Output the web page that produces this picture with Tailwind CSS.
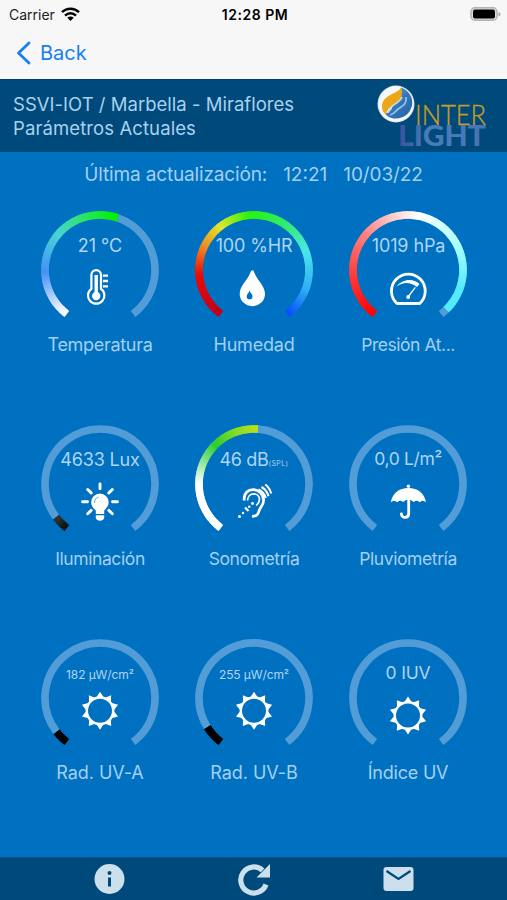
<!DOCTYPE html>
<html lang="es">
<head>
<meta charset="utf-8">
<title>SSVI-IOT</title>
<script src="https://cdn.jsdelivr.net/npm/@tailwindcss/browser@4"></script>
</head>
<body class="w-[507px] h-[900px] overflow-hidden bg-[#0071c1] font-['Inter','Liberation_Sans',sans-serif] flex flex-col">
<header class="h-[79px] shrink-0 bg-[#f7f7f8] flex flex-col">
  <div class="h-7 grid grid-cols-3 items-center pl-[9px] pr-[6px] text-[14px] text-[#222]">
    <div class="flex items-center gap-[6px]"><span>Carrier</span>
      <svg width="19" height="14" viewBox="0 0 19 14" fill="none" stroke="#050505" stroke-width="2.5"><path d="M1 5.2C5.8.5 13.2.5 18 5.2M4 8.6c3.2-3 7.8-3 11 0"/><path d="M9.5 14 6.3 10.8c1.8-1.6 4.6-1.6 6.4 0z" fill="#050505" stroke="none"/></svg>
    </div>
    <div class="text-center font-semibold text-black text-[14px] tracking-[0.55px] whitespace-nowrap">12:28 PM</div>
    <svg class="justify-self-end" width="31" height="15" viewBox="0 0 31 15"><rect x="1" y=".8" width="26" height="12.4" rx="4" fill="#ddd" stroke="#b4b4b4" stroke-width="1.5"/><rect x="3" y="2.6" width="22" height="8.8" rx="2" fill="#000"/><path d="M28.5 5v4.6q2-.6 2-2.3t-2-2.3" fill="#aaa"/></svg>
  </div>
  <div class="h-12 flex items-center gap-[9px] pl-4 pt-px text-[#1680f5] text-[20px]">
    <svg width="15" height="24" viewBox="0 0 15 24" fill="none" stroke="#1680f5" stroke-width="2.8" stroke-linecap="round" stroke-linejoin="round"><path d="M13 2 2.5 12 13 22"/></svg>
    <span>Back</span>
  </div>
</header>
<section class="h-[73px] shrink-0 bg-[#004a7b] border-t border-[#003e69] flex justify-between pl-[13px] pr-[18px]">
  <div class="pt-[12px] text-[18.5px] leading-6 text-[#a9d1f0] whitespace-nowrap"><p class="tracking-[0.02px]">SSVI-IOT / Marbella - Miraflores</p><p class="tracking-[0.1px]">Parámetros Actuales</p></div>
  <svg width="112" height="72" viewBox="0 0 112 72">
    <defs><linearGradient id="lg" x1="0" x2="1"><stop offset="0" stop-color="#394f9f"/><stop offset=".35" stop-color="#4a7dba"/><stop offset="1" stop-color="#4773b5"/></linearGradient>
    <linearGradient id="bl" x1="0" x2="1" y2="1"><stop offset="0" stop-color="#6cb5e8"/><stop offset=".5" stop-color="#3576bb"/><stop offset="1" stop-color="#2762a5"/></linearGradient></defs>
    <circle cx="19" cy="24" r="18.5" fill="#dfe5eb"/><circle cx="19" cy="24" r="17.4" fill="#f7f8f9"/>
    <path d="M24 7.500c8 3 12.500 10 11 18-2 8-8 13-16 13-5 0-9-2-11-5 5-1 7-4 8-9 6-3 10-8 8-17z" fill="url(#bl)"/>
    <path d="M24 7.500c-2 6-19 7-19 19 0 4 1 6 4 8 2-10 12-9 15-16 1.500-4 1-8 0-11z" fill="#eda716"/>
    <path d="M11 33c1-9 11-8 14-16" fill="none" stroke="#c7dcea" stroke-width="1.600"/>
    <path d="M29 17c1 9-5 9-9 13-2 2-3 4-7 5" fill="none" stroke="#8bc2e8" stroke-width="1.800"/>
    <text x="38" y="44.500" textLength="71" lengthAdjust="spacingAndGlyphs" class="font-['Lato'] font-light text-[27px]" fill="#c79b25" stroke="#c79b25" stroke-width=".35">INTER</text>
    <text x="21" y="65.500" textLength="88" lengthAdjust="spacingAndGlyphs" class="font-['Lato'] font-black text-[28px]" fill="url(#lg)">LIGHT</text>
  </svg>
</section>
<div class="h-[44px] shrink-0 flex justify-center items-center gap-4 pt-[2px] text-[19px] text-[#a3d0f0]"><span class="tracking-[-0.15px]">Última actualización:</span><span>12:21</span><span class="tracking-[-0.1px]">10/03/22</span></div>
<main id="grid" class="flex-1 pt-[14px] pl-[23px] grid grid-cols-[154px_154px_154px] auto-rows-[214px] content-start"></main>
<footer class="h-[43px] shrink-0 bg-[#004a7b] border-t border-[#00568f] flex items-center pl-[94px] text-[#ccdfed]">
  <svg width="31" height="32" viewBox="0 0 31 32"><circle cx="15.5" cy="16" r="15" fill="currentColor"/><circle cx="15.5" cy="10" r="2" fill="#004a7b"/><path d="M14 14.5h3v9h-3z" fill="#004a7b"/></svg>
  <svg class="ml-[113px]" width="33" height="33" viewBox="0 0 33 33"><path d="M24.6 7.400A13 13 0 1 0 28 21.500" fill="none" stroke="currentColor" stroke-width="5.200"/><path d="M32 1v13.500H18.500z" fill="currentColor"/></svg>
  <svg class="ml-[112px]" width="31" height="26" viewBox="0 0 31 26"><rect x=".5" y="1" width="30" height="24" rx="3" fill="currentColor"/><path d="m3.500 5 12 8 12-8" fill="none" stroke="#004a7b" stroke-width="2.200"/></svg>
</footer>
<script>
const R = 55, START = -143, END = 143;
const pt = (a, r = R, cx = 60, cy = 60) => { const t = a * Math.PI / 180; return (cx + r * Math.sin(t)).toFixed(2) + ' ' + (cy - r * Math.cos(t)).toFixed(2); };
const arc = (a, b, c) => `<path d="M${pt(a)}A${R} ${R} 0 ${b - a > 180 ? 1 : 0} 1 ${pt(b)}" fill="none" stroke="${c}" stroke-width="7.6"/>`;
function color(stops, a) {
  let i = 0;
  while (i < stops.length - 2 && a > stops[i + 1][0]) i++;
  const [p, c] = stops[i], [q, d] = stops[i + 1], t = Math.max(0, Math.min(1, (a - p) / (q - p)));
  return 'rgb(' + c.map((v, k) => Math.round(v + (d[k] - v) * t)).join() + ')';
}
function ring(end, stops) {
  let s = end >= END ? '' : arc(stops ? end : START, END, '#529dd8');
  if (stops) for (let a = START; a < end; a += 2) s += arc(a, Math.min(a + 3.5, end), color(stops, a + 1));
  return s;
}
function sun(cy) {
  let o = '';
  for (let i = 0; i < 10; i++) o += `M${pt(i*36-15,14,60,cy)}L${pt(i*36,19,60,cy)}L${pt(i*36+15,14,60,cy)}z`;
  return `<path d="${o}" fill="#fff"/><circle cx="60" cy="${cy}" r="13.2" fill="none" stroke="#fff" stroke-width="2.4"/>`;
}
const icons = {
  therm: `<g fill="none" stroke="#fff"><path d="M51.400 78.800V65a4.800 4.800 0 0 1 9.600 0v13.800a8.200 8.200 0 1 1-9.600 0z" stroke-width="2.200"/><path d="M56.200 65v20" stroke-width="3.400"/><path d="M63 65.600h5M63 71h5M63 76.400h5" stroke-width="2.400"/></g><circle cx="56.200" cy="86" r="4.200" fill="#fff"/>`,
  drop: `<path d="M58.400 60.300c-1.500 0-1.700 1.500-2.300 3C53.500 70 45.700 76 45.700 84a12.600 12.100 0 0 0 25.300 0c0-8-7.800-14-10.400-20.700-.6-1.500-.8-3-2.200-3z" fill="#fff"/><path d="M55.600 80.500c-.6 2.500-2.900 3.500-2.900 5.900a2.900 2.900 0 0 0 5.800 0c0-2.400-2.300-3.400-2.900-5.900z" fill="#0071c1"/>`,
  meter: `<g fill="none" stroke="#fff"><path d="M49 93.500A16.900 16.900 0 1 1 71.700 93.500z" stroke-width="2.800" stroke-linejoin="round"/><path d="M60 87 67.300 77.300" stroke-width="1.300"/></g><path d="M48.500 76.500C54 69 65 67.500 71.500 74L69 77C62 71.500 55 72 48.500 76.500z" fill="#fff"/><circle cx="60.200" cy="87" r="1.900" fill="#fff"/>`,
  bulb: `<path d="M55.800 90v-3.500C53 84 51.200 82 51.200 78.200a8.700 8.700 0 0 1 17.400 0c0 3.800-2 5.800-4.400 8.300V90z" fill="#fff"/><path d="M54.500 79c0-3.200 1.500-5.200 4-6" fill="none" stroke="#55a5de" stroke-width="1"/><path d="M55.800 91.300h8.400v2.800q-1 2.700-4.200 2.700t-4.200-2.700z" fill="#fff"/><path d="M60 60v4.700M42.500 77.700h5M72.500 77.700h5M47.700 65.500l3.500 3.400M72.300 65.500l-3.500 3.400M47.700 89.800l3.500-3.400M72.300 89.800l-3.500-3.400" stroke="#fff" stroke-width="2.900" stroke-linecap="round"/>`,
  ear: `<g fill="none" stroke="#fff"><path d="M50.200 76.500C49.300 61 69 63 69.600 76c.2 5-3.200 6.500-4.400 10.500-1 4-3 6.400-7.200 5.600" stroke-width="2.700"/><path d="M53.500 76.500C54 67.500 65 68 65.500 75.500c0 3-1.700 4.500-3.300 6" stroke-width="1.700"/><path d="M64.500 65.500c3.500 1.500 6 4.500 7.200 8.500M67.500 63c3.500 2 6 5.500 7 9.300M71.200 60.500c3 2 5 5.500 6 9" stroke-width="2.100"/><path d="M51 83.500 54.500 87" stroke-width="2.200"/></g><g fill="#fff"><circle cx="45.500" cy="92.500" r="1.500"/><circle cx="49" cy="89" r="1.200"/><circle cx="55.300" cy="82.800" r="1.200"/><circle cx="58.500" cy="79.500" r="1.400"/></g>`,
  umb: `<path d="M42.800 78.300C44.500 69 51 64 60.400 64s16 5 17.600 14.300q-3.300-3-6.600 0-2.700-2.800-5.500-.2-2.700-2.500-5.500-2.500t-5.500 2.500q-2.800-2.600-5.600.2-3.200-3-6.400 0z" fill="#fff"/><circle cx="60.400" cy="62.300" r="1.700" fill="#fff"/><path d="M60.700 75v14.500c0 5.200-7.300 5-7.300.3" fill="none" stroke="#fff" stroke-width="2.800" stroke-linecap="round"/>`,
  sun: sun(72.7), sunlow: sun(77.5)
};
const black = [[-143,[0,0,0]],[-110,[0,0,0]]], soot = [[-143,[10,12,13]],[-130,[45,50,50]]];
const temp = [[-143,[255,255,255]],[-132,[225,236,255]],[-92,[68,145,245]],[-50,[75,210,215]],[-15,[40,230,95]],[10,[8,240,15]],[20,[5,240,5]]];
const hum = [[-143,[190,0,30]],[-95,[235,10,5]],[-65,[240,140,35]],[-38,[225,230,45]],[-5,[40,245,10]],[35,[50,235,110]],[70,[75,230,235]],[110,[45,175,245]],[143,[10,75,255]]];
const pres = [[-143,[255,0,0]],[-95,[255,60,60]],[-50,[255,130,130]],[-15,[255,205,205]],[10,[255,255,255]],[60,[175,255,255]],[110,[85,235,255]],[137,[85,235,255]]];
const son = [[-143,[255,255,255]],[-90,[255,255,255]],[-45,[45,205,50]],[-20,[130,220,40]],[4,[190,225,25]]];
const S = 'text-[12px] pt-[4px] tracking-[-0.1px]';
const gauges = [
  ['21 °C', 'Temperatura', 19, temp, 'therm', 'text-[18px]', 'text-[18px] tracking-[-0.3px]'],
  ['100 %HR', 'Humedad', 143, hum, 'drop', 'text-[18px] tracking-[-0.15px]', 'text-[18px] tracking-[-0.2px]'],
  ['1019 hPa', 'Presión At...', 136, pres, 'meter', 'text-[18px] tracking-[-0.1px] pl-px', 'text-[17.5px] tracking-[-0.45px]'],
  ['4633 Lux', 'Iluminación', -127, soot, 'bulb', 'text-[18px] tracking-[-0.15px]', 'text-[17.5px] tracking-[-0.4px]'],
  ['46 dB<span class="text-[7px] tracking-[0.4px]">(SPL)</span>', 'Sonometría', 4, son, 'ear', 'text-[18px] tracking-[-0.35px]', 'text-[17.5px] tracking-[-0.4px]'],
  ['0,0 L/m²', 'Pluviometría', START, null, 'umb', 'text-[17.5px] tracking-[-0.35px]', 'text-[17.5px] tracking-[-0.4px]'],
  ['182 µW/cm²', 'Rad. UV-A', -128, black, 'sun', S, 'text-[18px] tracking-[-0.05px]'],
  ['255 µW/cm²', 'Rad. UV-B', -122, black, 'sun', S, 'text-[18px] tracking-[-0.05px]'],
  ['0 IUV', 'Índice UV', START, null, 'sunlow', 'text-[17.5px] tracking-[-0.2px]', 'text-[18px] tracking-[-0.2px]']
];
document.getElementById('grid').innerHTML = gauges.map(([v, l, e, st, ic, vc, lc]) => `
  <article class="flex flex-col items-center">
    <div class="grid w-[120px] h-[120px]">
      <svg class="col-start-1 row-start-1" width="120" height="120" viewBox="0 0 120 120">${ring(e, st)}${icons[ic]}</svg>
      <div class="col-start-1 row-start-1 h-[70px] flex items-center justify-center whitespace-nowrap text-[#afd5f2] ${vc}"><span>${v}</span></div>
    </div>
    <h2 class="mt-[3px] leading-6 text-[#a3d0f0] whitespace-nowrap ${lc}">${l}</h2>
  </article>`).join('');
</script>
</body>
</html>
